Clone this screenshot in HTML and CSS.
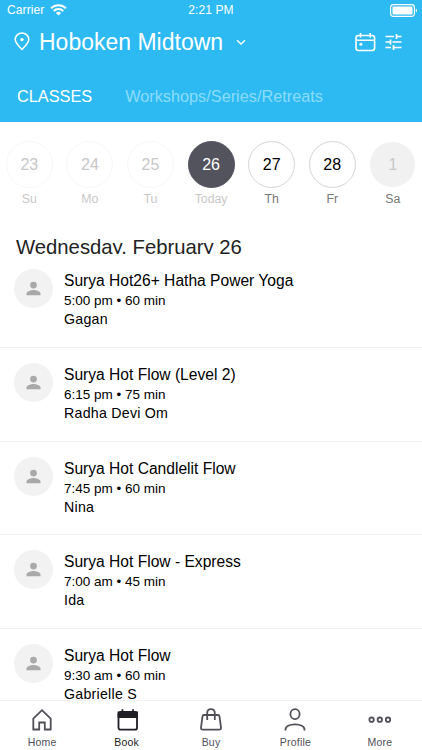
FILE: index.html
```html
<!DOCTYPE html>
<html lang="en">
<head>
  <meta charset="UTF-8" />
  <meta name="viewport" content="width=device-width, initial-scale=1.0"/>
  <title>Classes</title>
  <link rel="stylesheet" href="styles.css">
</head>
<body>
  <svg class="sprite" width="0" height="0">
    <symbol id="person" viewBox="0 0 16 16">
      <circle cx="8" cy="4.3" r="3.6"/>
      <path d="M.5 15.300v-1.800C.5 10.800 5.500 9.500 8 9.500s7.500 1.300 7.500 4v1.800z"/>
    </symbol>
  </svg>

  <header>
    <div class="status">
      <div class="carrier">
        <span>Carrier</span>
        <svg width="17" height="12" viewBox="0 0 17 12" fill="none" stroke="#fff" stroke-width="2">
          <path d="M1 4.300a10.600 10.600 0 0 1 15 0M3.700 7a6.800 6.800 0 0 1 9.600 0"/>
          <path d="M8.500 11.500 5.900 9a3.700 3.700 0 0 1 5.200 0z" fill="#fff" stroke="none"/>
        </svg>
      </div>
      <span class="clock">2:21 PM</span>
      <svg class="battery" width="28" height="13" viewBox="0 0 28 13">
        <rect x=".6" y=".6" width="23.800" height="11.800" rx="2.800" fill="none" stroke="#fff" stroke-width="1.100"/>
        <rect x="2.500" y="2.500" width="20" height="8" rx="1" fill="#fff"/>
        <path d="M25.800 4.300c1.600.7 1.600 3.700 0 4.400z" fill="#fff"/>
      </svg>
    </div>

    <div class="location">
      <svg class="pin" width="16" height="19" viewBox="0 0 16 19" fill="none" stroke="#fff" stroke-width="1.500">
        <path d="M8 17.500C5 14.500 1.200 11 1.200 7.600a6.800 6.700 0 0 1 13.600 0C14.800 11 11 14.500 8 17.500z"/>
        <circle cx="8" cy="7.600" r="1.700" fill="#fff" stroke="none"/>
      </svg>
      <h1>Hoboken Midtown</h1>
      <svg class="chevron" width="10" height="7" viewBox="0 0 10 7" fill="none" stroke="#fff" stroke-width="1.300">
        <path d="M1 1.200 5 5l4-3.800"/>
      </svg>
      <svg class="calendar" width="21" height="20" viewBox="0 0 21 20" fill="none" stroke="#fff" stroke-width="1.600">
        <rect x="1" y="3.500" width="18.600" height="15" rx="2.500"/>
        <path d="M1 8.300h18.600M5.500 1v4.500M15.200 1v4.500"/>
        <circle cx="5.900" cy="12.300" r="1.500" fill="#fff" stroke="none"/>
      </svg>
      <svg class="filters" width="18" height="18" viewBox="0 0 18 18" fill="none" stroke="#fff" stroke-width="1.700">
        <path d="M.5 3.500H9M11.500 3.500h5M11.500 1v5M.5 9H5M7.500 9h9M5.500 6.500v5M.5 14.500H6M8.500 14.500h8M8.500 12v5"/>
      </svg>
    </div>

    <nav class="tabs">
      <span class="active">CLASSES</span>
      <span>Workshops/Series/Retreats</span>
    </nav>
  </header>

  <main>
    <div class="days">
      <div class="day past"><b>23</b><span>Su</span></div>
      <div class="day past"><b>24</b><span>Mo</span></div>
      <div class="day past"><b>25</b><span>Tu</span></div>
      <div class="day today"><b>26</b><span>Today</span></div>
      <div class="day"><b>27</b><span>Th</span></div>
      <div class="day"><b>28</b><span>Fr</span></div>
      <div class="day closed"><b>1</b><span>Sa</span></div>
    </div>

    <h2>Wednesday, February 26</h2>

    <div class="class-list">
      <div class="class-row">
        <div class="avatar"><svg width="15" height="15"><use href="#person"/></svg></div>
        <div class="info">
          <h3>Surya Hot26+ Hatha Power Yoga</h3>
          <p class="time">5:00 pm • 60 min</p>
          <p class="teacher">Gagan</p>
        </div>
      </div>
      <div class="class-row">
        <div class="avatar"><svg width="15" height="15"><use href="#person"/></svg></div>
        <div class="info">
          <h3>Surya Hot Flow (Level 2)</h3>
          <p class="time">6:15 pm • 75 min</p>
          <p class="teacher">Radha Devi Om</p>
        </div>
      </div>
      <div class="class-row">
        <div class="avatar"><svg width="15" height="15"><use href="#person"/></svg></div>
        <div class="info">
          <h3>Surya Hot Candlelit Flow</h3>
          <p class="time">7:45 pm • 60 min</p>
          <p class="teacher">Nina</p>
        </div>
      </div>
      <div class="class-row">
        <div class="avatar"><svg width="15" height="15"><use href="#person"/></svg></div>
        <div class="info">
          <h3>Surya Hot Flow - Express</h3>
          <p class="time">7:00 am • 45 min</p>
          <p class="teacher">Ida</p>
        </div>
      </div>
      <div class="class-row">
        <div class="avatar"><svg width="15" height="15"><use href="#person"/></svg></div>
        <div class="info">
          <h3>Surya Hot Flow</h3>
          <p class="time">9:30 am • 60 min</p>
          <p class="teacher">Gabrielle S</p>
        </div>
      </div>
    </div>
  </main>

  <footer>
    <div class="tab">
      <svg width="24" height="24" viewBox="0 0 24 24">
        <path d="M3.300 10.700 12 2.200l8.700 8.500v10.800h-5.900v-7H9.200v7H3.300z"/>
      </svg>
      <span>Home</span>
    </div>
    <div class="tab active">
      <svg width="24" height="24" viewBox="0 0 24 24">
        <rect x="3.500" y="4" width="18.500" height="17.700" rx="2"/>
        <path d="M3.500 4.500h18.500v4.500H3.500z" fill="#1f1f24"/>
        <path d="M7.500 1.300V5M18 1.300V5"/>
      </svg>
      <span>Book</span>
    </div>
    <div class="tab">
      <svg width="24" height="24" viewBox="0 0 24 24">
        <path d="M5 7h14q1.300 0 1.500 1.300l1.500 11.400q.2 2-1.800 2H3.800q-2 0-1.800-2L3.500 8.300Q3.700 7 5 7z"/>
        <path d="M8.200 12V5q0-3.800 3.800-3.800T15.800 5v7"/>
      </svg>
      <span>Buy</span>
    </div>
    <div class="tab">
      <svg width="24" height="24" viewBox="0 0 24 24">
        <ellipse cx="12" cy="6.200" rx="4.600" ry="5"/>
        <path d="M2.500 22.500v-.8c0-3.400 4-5.400 9.500-5.400s9.500 2 9.500 5.400v.8"/>
      </svg>
      <span>Profile</span>
    </div>
    <div class="tab">
      <svg width="24" height="24" viewBox="0 0 24 24">
        <circle cx="3.600" cy="11.700" r="2.200"/>
        <circle cx="11.800" cy="11.700" r="2.200"/>
        <circle cx="20" cy="11.700" r="2.200"/>
      </svg>
      <span>More</span>
    </div>
  </footer>
</body>
</html>
```

FILE: styles.css
```css
* { box-sizing: border-box; }
body {
  font-family: 'Liberation Sans', Arial, sans-serif;
  margin: 0;
  height: 750px;
  display: flex;
  flex-direction: column;
  overflow: hidden;
  background: #fff;
  color: #111;
  white-space: nowrap;
}
h1, h2, h3, p {
  margin: 0;
  font-weight: normal;
}
svg {
  display: block;
  flex: none;
}
.sprite {
  position: absolute;
}
header {
  height: 122px;
  flex: none;
  background: #2dbaf3;
  color: #fff;
}
.status {
  display: grid;
  grid-template-columns: 1fr auto 1fr;
  align-items: center;
  height: 20px;
  padding: 0 4px 0 7px;
  font-size: 12px;
}
.carrier {
  display: flex;
  align-items: center;
  gap: 6px;
  letter-spacing: 0.1px;
}
.clock {
  padding-bottom: 1px;
  margin-right: 3px;
  letter-spacing: 0.1px;
}
.battery {
  justify-self: end;
}
.location {
  display: flex;
  align-items: center;
  height: 44px;
  padding: 0 19px 0 14px;
}
.pin {
  margin-bottom: 1px;
}
.location h1 {
  margin-left: 9px;
  font-size: 23px;
  line-height: 44px;
}
.chevron {
  margin-left: 13px;
}
.calendar {
  margin-left: auto;
}
.filters {
  margin-left: 9px;
}
.tabs {
  display: flex;
  gap: 33px;
  height: 58px;
  padding: 3px 0 0 17px;
  font-size: 16.3px;
  line-height: 58px;
  color: #8bdcfb;
}
.tabs .active {
  color: #fff;
}
main {
  flex: 1;
  min-height: 0;
  overflow: hidden;
}
.days {
  display: grid;
  grid-template-columns: repeat(7, 60.6px);
  margin-left: -1px;
  padding-top: 19px;
}
.day {
  display: flex;
  flex-direction: column;
  align-items: center;
  font-size: 12.3px;
  color: #777;
}
.day b {
  width: 47px;
  height: 47px;
  border: 1px solid #d5d5d5;
  border-radius: 50%;
  font-size: 16px;
  font-weight: normal;
  line-height: 45px;
  text-align: center;
  color: #000;
}
.day span {
  margin-top: 3px;
  line-height: 16px;
}
.day.past, .day.past b {
  color: #c8c8c8;
}
.day.past b {
  border-color: #f7f7f7;
}
.day.today {
  color: #c8c8c8;
}
.day.today b {
  background: #52535d;
  border-color: #52535d;
  color: #fff;
}
.day.closed b {
  background: #f1f1f1;
  border-color: #fff;
  color: #c8c8c8;
}
h2 {
  height: 20px;
  margin: 27px 0 0 16px;
  overflow: hidden;
  font-size: 20.3px;
  line-height: 27px;
  color: #222;
}
.class-row {
  display: flex;
  height: 93.75px;
  padding: 15px 0 0 14px;
  border-bottom: 1px solid #f2f2f2;
}
.avatar {
  display: flex;
  align-items: center;
  justify-content: center;
  width: 39px;
  height: 39px;
  border-radius: 50%;
  background: #f2f2f2;
  fill: #a9a9a9;
}
.info {
  margin-left: 11px;
  color: #000;
}
.info h3 {
  padding-top: 2px;
  font-size: 15.6px;
  line-height: 20px;
}
.time {
  font-size: 13.5px;
  line-height: 19px;
}
.teacher {
  font-size: 14.2px;
  line-height: 19px;
  letter-spacing: 0.25px;
}
footer {
  display: flex;
  flex: none;
  height: 50px;
  border-top: 1px solid #f2f2f2;
  background: #fff;
}
.tab {
  flex: 1;
  display: flex;
  flex-direction: column;
  align-items: center;
  padding-top: 7px;
  font-size: 10.5px;
  letter-spacing: 0.2px;
  line-height: 12px;
  color: #505058;
}
.tab svg {
  fill: none;
  stroke: #505058;
  stroke-width: 1.8;
}
.tab span {
  margin-top: 4px;
}
.tab.active {
  color: #1f1f24;
}
.tab.active svg {
  stroke: #1f1f24;
}
```
